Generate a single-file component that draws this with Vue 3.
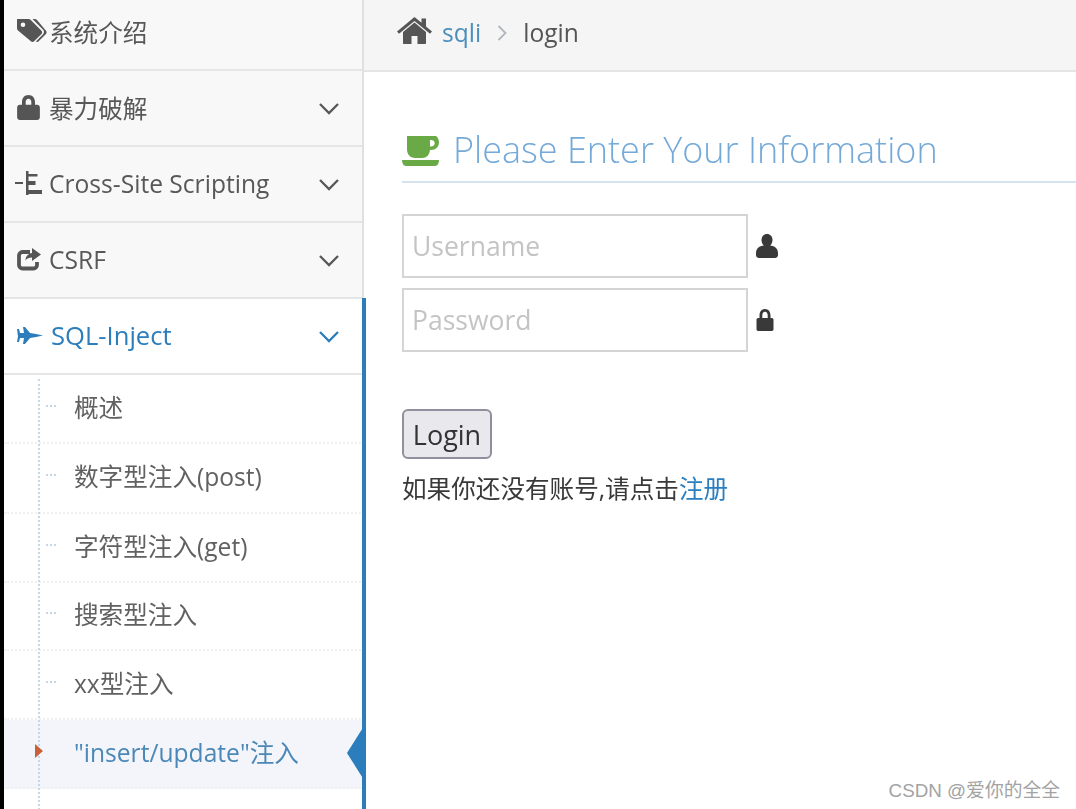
<script setup>
const navs = [
  { key: 'tags', label: '系统介绍', arrow: false },
  { key: 'lock', label: '暴力破解', arrow: true },
  { key: 'tree', label: 'Cross-Site Scripting', arrow: true },
  { key: 'share', label: 'CSRF', arrow: true }
]
const subs = [
  { label: '概述', h: 69 },
  { label: '数字型注入(post)', h: 70 },
  { label: '字符型注入(get)', h: 69 },
  { label: '搜索型注入', h: 68 },
  { label: 'xx型注入', h: 69 },
  { label: '"insert/update"注入', h: 69, active: true }
]
</script>

<template>
  <div class="page">
    <div class="shell">
      <aside class="sidebar">
        <div v-for="n in navs" :key="n.key" class="nav-row" :class="{ intro: n.key === 'tags' }">
          <span class="nav-icon">
            <svg v-if="n.key === 'tags'" width="30" height="26" viewBox="0 0 30 26">
              <path fill="currentColor" d="M0 1h11.500c.9 0 1.700.4 2.300 1l10.700 10.700c.9.9.9 2.300 0 3.200l-7.400 7.400c-.9.9-2.300.9-3.200 0L1 12.600c-.6-.6-1-1.400-1-2.300zM6 4.500a2.300 2.300 0 1 0 0 4.600 2.300 2.300 0 0 0 0-4.600z"/>
              <path fill="currentColor" d="M15.500 1h2.200c.9 0 1.700.4 2.300 1l9 10.700c.8.9.8 2.300 0 3.200l-7.300 7.400c-.8.8-1.700.9-2.800.3l7.200-7.400c1.200-1.300 1.200-3.100 0-4.400z"/>
            </svg>
            <svg v-else-if="n.key === 'lock'" width="23" height="26" viewBox="1.500 0 21 24">
              <path fill="currentColor" d="M6 10V7.500C6 3.600 8.400 1 12 1s6 2.600 6 6.500V10h2c1.400 0 2.500 1.100 2.500 2.500v9c0 1.400-1.100 2.500-2.500 2.500H4c-1.400 0-2.500-1.100-2.500-2.500v-9C1.500 11.100 2.600 10 4 10zm3.400 0h5.200V7.500c0-1.900-1-3.100-2.600-3.100S9.400 5.600 9.400 7.500z"/>
            </svg>
            <svg v-else-if="n.key === 'tree'" class="tree" width="28" height="24" viewBox="0 0 28 24">
              <path fill="currentColor" d="M0 11h8v2H0zM11 0h2.500v24H11zM13.500 3h9v2.500h-9zM13.500 10h7v4h-7zM13.500 19H27v4H13.500z"/>
            </svg>
            <svg v-else width="25" height="24" viewBox="0 0 25 24">
              <path fill="none" stroke="currentColor" stroke-width="3.800" d="M20 15v3c0 2-1.500 3.500-3.500 3.500H5.500C3.500 21.500 2 20 2 18V8.500C2 6.500 3.500 5 5.500 5H13"/>
              <path fill="currentColor" d="M15 1l9 6.500-9 6.500v-3.500c-3 0-5 .8-6.500 3 0-4 2.500-7 6.500-7.500z"/>
            </svg>
          </span>
          <span class="nav-label">{{ n.label }}</span>
          <svg v-if="n.arrow" class="chev" width="22" height="14" viewBox="0 0 22 14"><path fill="none" stroke="currentColor" stroke-width="2.300" d="M2 3l9 9 9-9"/></svg>
        </div>

        <section class="group">
          <div class="nav-row open">
            <span class="nav-icon">
              <svg width="26" height="17" viewBox="0 0 26 17">
                <path fill="currentColor" d="M0 2h2l1 4h4L6 0h2l5 6 6 1 7 1.500-7 1.500-6 1-5 6H6l1-6H3l-1 4H0l1-5.500z"/>
              </svg>
            </span>
            <span class="nav-label strong">SQL-Inject</span>
            <svg class="chev" width="22" height="14" viewBox="0 0 22 14"><path fill="none" stroke="currentColor" stroke-width="2.300" d="M2 3l9 9 9-9"/></svg>
          </div>
          <ul class="subs">
            <li v-for="s in subs" :key="s.label" class="sub" :class="{ active: s.active }" :style="{ height: s.h + 'px' }">
              <span v-if="s.active" class="caret"></span>
              <span v-else class="dots"></span>
              <span>{{ s.label }}</span>
            </li>
          </ul>
          <span class="pointer"></span>
        </section>
      </aside>

      <main class="main">
        <nav class="crumbs">
          <svg class="home" width="35" height="28" viewBox="0 0 35 28">
            <path fill="currentColor" d="M17.500 5.500L6 15v11c0 .6.400 1 1 1h7.500v-8h6v8H28c.6 0 1-.4 1-1V15z"/>
            <path fill="currentColor" d="M17.500 0L0 14.500l2 2.300L17.500 4 33 16.800l2-2.300-6-5V1.500h-4.500v4.300z"/>
          </svg>
          <a class="crumb-link">sqli</a>
          <svg class="sep" width="10" height="18" viewBox="0 0 10 18"><path fill="none" stroke="currentColor" stroke-width="1.800" d="M1.500 2l7 7-7 7"/></svg>
          <span class="crumb-cur">login</span>
        </nav>

        <div class="content">
          <h2 class="title">
            <svg class="cup" width="37" height="30" viewBox="0 0 37 30">
              <path fill="#69aa46" d="M5 0h29c1.500 1 3 3.500 3 6.500 0 4.500-3.500 7.500-8 7.500h-1c-.5 5-3.500 8-8 8H13c-5 0-8-3.500-8-9zM28 4v6.500h1c2 0 3.700-1.300 3.700-3.300S31 4 29 4z"/>
              <path fill="#69aa46" d="M0 24h37c0 3-1.500 6-4 6H4c-2.500 0-4-3-4-6z"/>
            </svg>
            <span>Please Enter Your Information</span>
          </h2>

          <form class="form" @submit.prevent>
            <div class="field">
              <input class="input" type="text" placeholder="Username" />
              <svg width="22" height="24" viewBox="0 0 22 24">
                <path fill="currentColor" d="M11 0c3.300 0 5.500 2.500 5.500 6 0 2.400-1 4.400-2.400 5.500 4.600.4 7.900 3 7.900 7.500v2c0 1.600-1.200 3-3 3H3c-1.800 0-3-1.400-3-3v-2c0-4.500 3.300-7.100 7.900-7.500C6.500 10.400 5.500 8.400 5.500 6 5.500 2.500 7.700 0 11 0z"/>
              </svg>
            </div>
            <div class="field">
              <input class="input" type="password" placeholder="Password" />
              <svg width="18" height="22" viewBox="0 0 18 22">
                <path fill="currentColor" d="M3.500 9V6.500C3.500 2.800 5.600 0 9 0s5.500 2.800 5.500 6.500V9h1.300c1 0 1.700.8 1.700 1.700v9.600c0 1-.7 1.700-1.700 1.700H2.200C1.200 22 .5 21.300.5 20.300v-9.600C.5 9.800 1.200 9 2.200 9zm2.800 0h5.400V6.500c0-2-1-3.700-2.700-3.700S6.300 4.500 6.300 6.500z"/>
              </svg>
            </div>
            <button class="login" type="button">Login</button>
          </form>
          <p class="hint">如果你还没有账号,请点击<a class="reg">注册</a></p>
        </div>
      </main>
    </div>
    <span class="mark">CSDN @爱你的全全</span>
  </div>
</template>

<style>
html, body { margin: 0; background: #fff; }
</style>

<style scoped>
.page {
  position: relative;
  width: 1076px;
  height: 809px;
  overflow: hidden;
  background: #000;
  font-family: "Open Sans", "Noto Sans CJK SC", sans-serif;
  font-size: 24.6px;
  color: #585858;
}
.shell {
  display: flex;
  height: 100%;
  margin-left: 4px;
  background: #fff;
  filter: blur(0.5px);
}
.sidebar {
  width: 358px;
  flex: none;
  background: #f8f8f8;
  border-right: 2px solid #e0e0e0;
}
.nav-row {
  display: flex;
  align-items: center;
  box-sizing: border-box;
  height: 76px;
  padding: 0 22px 2px 13px;
  border-bottom: 2px solid #e5e5e5;
  color: #585858;
}
.intro { height: 71px; padding-bottom: 7px; }
.nav-icon {
  width: 32px;
  flex: none;
  display: flex;
  align-items: center;
  color: #555;
}
.tree { margin-left: -2px; }
.nav-label { flex: 1; white-space: nowrap; }
.chev { color: #585858; flex: none; margin-top: 2px; }
.group {
  position: relative;
  background: #fff;
  margin-right: -2px;
  height: 511px;
}
.group::after {
  content: "";
  position: absolute;
  top: -1px;
  right: -2px;
  bottom: 0;
  width: 4px;
  background: #2b7dbc;
}
.open { background: #fff; color: #2b7dbc; padding: 0 24px 2px 13px; }
.open .nav-icon, .open .chev { color: #2b7dbc; }
.strong { padding-left: 2px; font-size: 25.6px; }
.subs {
  position: relative;
  list-style: none;
  margin: 0;
  padding: 0;
}
.subs::before {
  content: "";
  position: absolute;
  z-index: 1;
  left: 34px;
  top: 4px;
  height: 431px;
  border-left: 2px dotted #c3d9ea;
}
.sub {
  position: relative;
  display: flex;
  align-items: center;
  box-sizing: border-box;
  padding: 0 0 6px 70px;
  border-bottom: 2px dotted #f0f0f0;
  color: #616161;
  white-space: nowrap;
}
.dots {
  position: absolute;
  left: 42px;
  width: 10px;
  border-top: 2px dotted #c5d7e6;
}
.active { background: #f3f5fa; color: #4b88b7; }
.caret {
  position: absolute;
  z-index: 2;
  left: 31px;
  width: 0;
  height: 0;
  border-left: 8px solid #c86139;
  border-top: 7px solid transparent;
  border-bottom: 7px solid transparent;
}
.pointer {
  position: absolute;
  right: 0;
  top: 427px;
  width: 17px;
  height: 54px;
  background: #2b7dbc;
  clip-path: polygon(100% 0, 0 50%, 100% 100%);
}
.main { flex: 1; min-width: 0; }
.crumbs {
  display: flex;
  align-items: center;
  box-sizing: border-box;
  height: 72px;
  padding: 0 0 5px 33px;
  background: #f5f5f5;
  border-bottom: 2px solid #e5e5e5;
}
.home { color: #555; margin: -3px 10px 0 0; }
.crumb-link { color: #4c8fbd; }
.sep { color: #b2b6bf; margin: 0 16px; }
.crumb-cur { color: #555; }
.content { padding: 0 0 0 38px; }
.title {
  display: flex;
  align-items: center;
  gap: 14px;
  height: 111px;
  margin: 0;
  box-sizing: border-box;
  padding-top: 46px;
  border-bottom: 2px solid #d5e3ef;
  font-size: 36px;
  font-weight: 300;
  color: #74a9d8;
  white-space: nowrap;
}
.cup { margin-top: 2px; }
.form { display: flex; flex-direction: column; padding-top: 31px; }
.field {
  display: flex;
  align-items: center;
  gap: 8px;
  margin-bottom: 10px;
  color: #393939;
}
.input {
  width: 346px;
  height: 64px;
  box-sizing: border-box;
  padding: 0 8px;
  border: 2px solid #d5d5d5;
  border-radius: 0;
  outline: none;
  background: #fff;
  font: inherit;
  font-size: 26.5px;
  color: #393939;
}
.input::placeholder { color: #c4c4c4; opacity: 1; }
.login {
  align-self: flex-start;
  width: 90px;
  height: 50px;
  margin-top: 47px;
  padding: 0;
  border: 2px solid #8f8f9d;
  border-radius: 6px;
  background: #e9e9ed;
  font: inherit;
  font-size: 27px;
  color: #333;
}
.hint { margin: 13px 0 0; color: #393939; line-height: 34px; white-space: nowrap; }
.reg { color: #2a7fc0; }
.mark {
  position: absolute;
  right: 16px;
  bottom: 7px;
  font-family: "Liberation Sans", "Noto Sans CJK SC", sans-serif;
  font-size: 18.8px;
  color: #a3a3a3;
  white-space: nowrap;
}
</style>
